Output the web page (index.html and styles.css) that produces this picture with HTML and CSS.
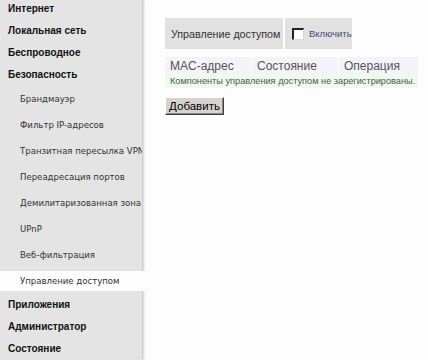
FILE: index.html
```html
<!DOCTYPE html>
<html lang="ru">
<head>
    <meta charset="UTF-8">
    <title>Управление доступом</title>
    <link rel="stylesheet" href="styles.css">
</head>
<body>
    <div class="layout">
        <div class="sidebar">
            <div class="menu-top">Интернет</div>
            <div class="menu-top">Локальная сеть</div>
            <div class="menu-top">Беспроводное</div>
            <div class="menu-top">Безопасность</div>
            <div class="submenu">
                <div class="menu-sub">Брандмауэр</div>
                <div class="menu-sub">Фильтр IP-адресов</div>
                <div class="menu-sub">Транзитная пересылка VPN</div>
                <div class="menu-sub">Переадресация портов</div>
                <div class="menu-sub">Демилитаризованная зона</div>
                <div class="menu-sub">UPnP</div>
                <div class="menu-sub">Веб-фильтрация</div>
                <div class="menu-sub active">Управление доступом</div>
            </div>
            <div class="menu-top">Приложения</div>
            <div class="menu-top">Администратор</div>
            <div class="menu-top">Состояние</div>
        </div>

        <div class="content">
            <div class="title-bar">
                <div class="title-cell">Управление доступом</div>
                <label class="enable-cell"><span class="check"></span>Включить</label>
            </div>

            <table class="list">
                <tr class="list-head">
                    <td class="col-mac">MAC-адрес</td>
                    <td class="col-state">Состояние</td>
                    <td>Операция</td>
                </tr>
                <tr class="list-empty">
                    <td colspan="3">Компоненты управления доступом не зарегистрированы.</td>
                </tr>
            </table>

            <button class="btn">Добавить</button>
        </div>
    </div>
</body>
</html>
```

FILE: styles.css
```css
body {
    margin: 0;
    background: #fdfdfd;
    font-family: "Liberation Sans", Arial, sans-serif;
    overflow: hidden;
}

.layout {
    display: flex;
    height: 360px;
}

.sidebar {
    width: 142px;
    flex-shrink: 0;
    margin-top: -2px;
    background: #e4e4e4;
    box-shadow: 1px 0 3px rgba(0, 0, 0, 0.3);
    white-space: nowrap;
}

.menu-top {
    height: 22px;
    line-height: 22px;
    padding-left: 8px;
    font-size: 10px;
    font-weight: bold;
    color: #111;
}

.submenu {
    display: flex;
    flex-direction: column;
    gap: 6px;
    padding: 3px 0;
}

.menu-sub {
    height: 20px;
    line-height: 20px;
    padding-left: 20px;
    font-family: "DejaVu Sans Condensed", "DejaVu Sans", sans-serif;
    font-size: 9.5px;
    color: #333;
    overflow: hidden;
}

.menu-sub.active {
    position: relative;
    margin-right: -5px;
    background: #fdfdfd;
}

.content {
    padding: 18px 0 0 23px;
    flex: 1;
}

.title-bar {
    display: flex;
    gap: 2px;
    width: 187px;
    height: 31px;
}

.title-cell,
.enable-cell {
    display: flex;
    align-items: center;
    background: #e1e1e1;
    white-space: nowrap;
}

.title-cell {
    width: 112px;
    flex-shrink: 0;
    padding-left: 6px;
    font-size: 10.7px;
    color: #333;
}

.enable-cell {
    flex: 1;
    padding-left: 7px;
    font-size: 9.5px;
    color: #3c4a78;
}

.check {
    width: 9px;
    height: 9px;
    margin-right: 5px;
    background: #fff;
    border-top: 2px solid #222;
    border-left: 2px solid #222;
    border-right: 1px solid #d8d8d8;
    border-bottom: 1px solid #d8d8d8;
}

.list {
    width: 255px;
    margin-top: 8px;
    border-collapse: separate;
    border-spacing: 1px 0;
    margin-left: -1px;
}

.list td {
    padding: 0 0 0 5px;
    white-space: nowrap;
}

.list-head td {
    height: 17px;
    background: #f3f3f9;
    font-size: 12px;
    color: #555;
}

.col-mac {
    width: 81px;
}

.col-state {
    width: 81px;
}

.list-empty td {
    height: 14px;
    background: #eefbec;
    font-size: 9.2px;
    color: #4a5a4a;
}

.btn {
    display: block;
    margin-top: 9px;
    width: 59px;
    height: 18px;
    padding: 0;
    background: #d6d3ce;
    border: 1px solid;
    border-color: #fff #404040 #404040 #fff;
    box-shadow: inset -1px -1px 0 #888;
    font-family: "Liberation Sans", Arial, sans-serif;
    font-size: 11.5px;
    color: #000;
}
```
